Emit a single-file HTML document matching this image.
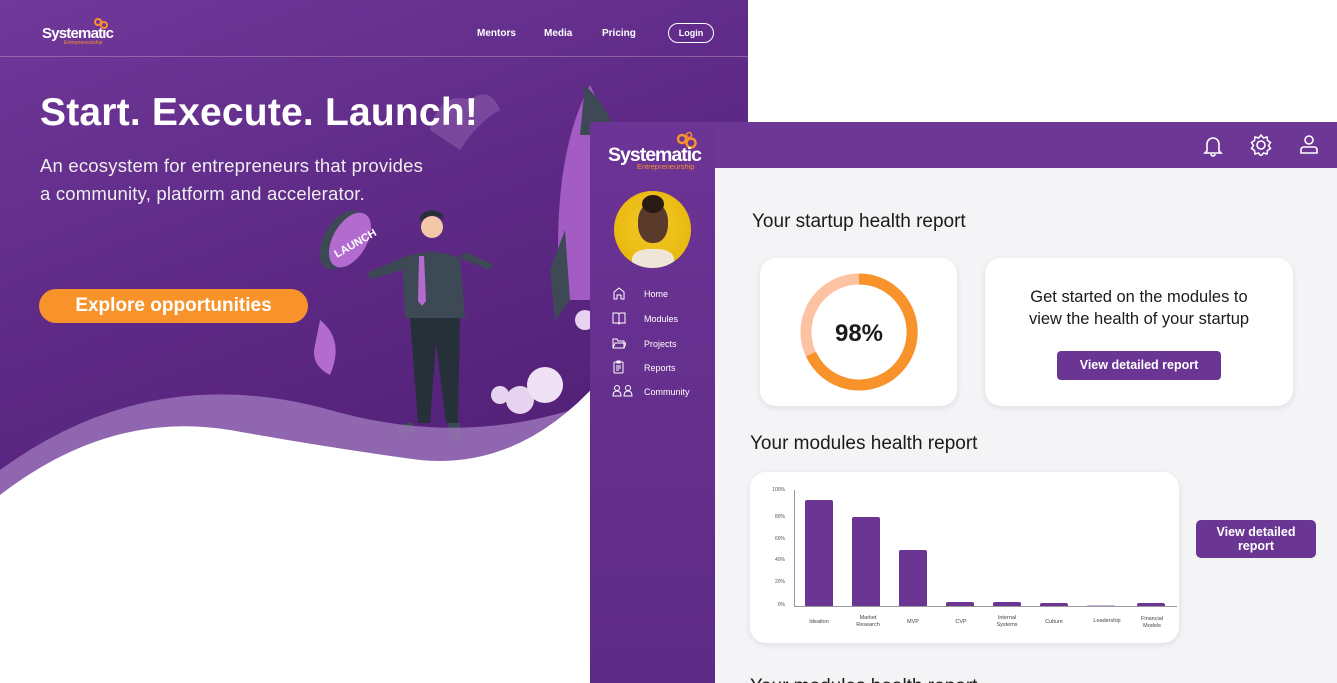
<!DOCTYPE html>
<html><head><meta charset="utf-8"><style>
*{margin:0;padding:0;box-sizing:border-box}
html,body{width:1337px;height:683px;overflow:hidden}
body{background:#fff;position:relative;font-family:"Liberation Sans",sans-serif}
.abs{position:absolute}
.land{left:0;top:0;width:748px;height:500px;background:linear-gradient(160deg,#71389a 0%,#5e2a86 45%,#4f1d72 100%);overflow:hidden}
.nav a{position:absolute;color:#fff;font-size:10px;font-weight:bold;top:28px}
.dash{left:590px;top:122px;width:747px;height:561px;background:#f4f3f5;overflow:hidden}
.side{left:0;top:0;width:125px;height:561px;background:linear-gradient(180deg,#6c3495,#5e2a87)}
.head{left:0;top:0;width:747px;height:46px;background:#6d3795}
.card{background:#fff;border-radius:16px;box-shadow:0 2px 6px rgba(100,60,140,.12)}
.btn{background:#6b3594;color:#fff;font-weight:bold;border-radius:4px;text-align:center}
.ni{position:absolute;left:24px;color:#fff;font-size:9px}
.ni svg{position:absolute;left:-2px;top:-3px}
.ni span{position:absolute;left:30px;top:0;white-space:nowrap}
.yl{position:absolute;left:10px;width:25px;text-align:right;font-size:5px;color:#555}
.bar{position:absolute;background:#6b3594;width:28px;border-radius:2px 2px 0 0}
.xl{position:absolute;font-size:5.5px;color:#444;text-align:center;width:40px;line-height:7px}
</style></head><body>

<div class="abs land">
  <svg class="abs" style="left:0;top:0" width="748" height="500">
    <path d="M430 130 q10-40 40-30 q20-15 30 10 q-20 10-40 40 z" fill="#8a5aa8" opacity=".6"/>
    <path d="M560 300 q-10-140 30-215 q30 60 40 215 z" fill="#a35cc4"/>
    <path d="M585 85 q25 25 30 50 l-35 0 z" fill="#3d4a55"/>
    <path d="M565 230 l-15 40 l5 50 l15-20 z" fill="#3d4a55"/>
    <ellipse cx="342" cy="240" rx="18" ry="32" transform="rotate(30 342 240)" fill="#3d4a55"/>
    <ellipse cx="350" cy="240" rx="17" ry="30" transform="rotate(30 350 240)" fill="#b36bd0"/>
    <text x="337" y="258" fill="#fff" font-size="11" font-weight="bold" transform="rotate(-30 337 258)">LAUNCH</text>
    <circle cx="432" cy="227" r="11" fill="#f4c7a8"/><path d="M420 222 q12-12 24-2 l-2-6 q-12-8-22 2z" fill="#253038"/>
    <path d="M402 258 q30-12 58 0 l5 60 l-60 0 z" fill="#3d4a55"/>
    <path d="M402 258 l-35 15 l4 6 l35-10z M460 258 l30 12 l3-6 l-28-12z" fill="#3d4a55"/>
    <path d="M419 256 l5 0 l2 45 l-4 5 l-4-5z" fill="#b36bd0"/>
    <path d="M410 318 l50 0 l-2 105 l-12 0 l-10-80 l-6 80 l-12 0z" fill="#253038"/>
    <path d="M398 425 l15-3 l2 10 l-18 3z M448 423 l12 0 l0 18 l-10 0z" fill="#3d4a55"/>
    <path d="M320 320 q25 20 10 55 q-20-10-15-30z" fill="#b36bd0"/>
    <circle cx="520" cy="400" r="14" fill="#e6d3ef"/><circle cx="545" cy="385" r="18" fill="#efe2f5"/><circle cx="500" cy="395" r="9" fill="#e6d3ef"/><circle cx="585" cy="320" r="10" fill="#e6d3ef"/>
    <path d="M0 470 Q150 360 330 410 Q470 450 600 400 L748 360 L748 500 L0 500z" fill="#9a72b8" opacity=".85"/>
    <path d="M0 495 Q110 410 230 430 Q330 448 420 460 Q520 470 600 380 L748 330 L748 500 L0 500z" fill="#fff"/>
  </svg>
  <div class="abs" style="left:0;top:56px;width:748px;height:1px;background:rgba(255,255,255,.25)"></div>
  <div class="abs" style="left:42px;top:25px;color:#fff;font-weight:bold;font-size:15px;letter-spacing:-.8px">Systematic</div>
  <div class="abs" style="left:64px;top:40px;color:#f7932a;font-size:5px">Entrepreneurship</div>
  <svg class="abs" style="left:93px;top:16px" width="16" height="14"><circle cx="5" cy="6" r="3" fill="none" stroke="#f7932a" stroke-width="2"/><circle cx="11" cy="9" r="3" fill="none" stroke="#f7932a" stroke-width="2"/></svg>
  <div class="nav"><a style="left:477px">Mentors</a><a style="left:544px">Media</a><a style="left:602px">Pricing</a></div>
  <div class="abs" style="left:668px;top:23px;width:46px;height:20px;border:1px solid #fff;border-radius:10px;color:#fff;font-size:9px;font-weight:bold;text-align:center;line-height:18px">Login</div>
  <div class="abs" style="left:40px;top:91px;color:#fff;font-size:39px;font-weight:bold;letter-spacing:.2px">Start. Execute. Launch!</div>
  <div class="abs" style="left:40px;top:152px;color:#eee;font-size:18.5px;line-height:28px;letter-spacing:.2px">An ecosystem for entrepreneurs that provides<br>a community, platform and accelerator.</div>
  <div class="abs" style="left:39px;top:289px;width:269px;height:34px;background:#f7932a;border-radius:17px;color:#fff;font-size:19px;font-weight:bold;text-align:center;line-height:34px">Explore opportunities</div>
</div>

<div class="abs dash">
  <div class="abs head"></div>
  <div class="abs side">
    <svg class="abs" style="left:85px;top:9px" width="24" height="20"><circle cx="7" cy="8" r="4" fill="none" stroke="#f7932a" stroke-width="2.5"/><circle cx="16" cy="12" r="4.5" fill="none" stroke="#f7932a" stroke-width="2.5"/><circle cx="14" cy="4" r="2.5" fill="none" stroke="#f7932a" stroke-width="1.5"/></svg>
    <div class="abs" style="left:18px;top:22px;color:#fff;font-weight:bold;font-size:19.5px;letter-spacing:-1px">Systematic</div>
    <div class="abs" style="left:47px;top:40px;color:#f7932a;font-size:7.5px">Entrepreneurship</div>
    <div class="abs" style="left:24px;top:69px;width:77px;height:77px;border-radius:50%;background:radial-gradient(circle at 50% 45%,#f3c92a 0%,#e9b90f 70%,#d8a300 100%);overflow:hidden">
      <div class="abs" style="left:24px;top:12px;width:30px;height:40px;border-radius:45%;background:#5a3a2a"></div>
      <div class="abs" style="left:18px;top:58px;width:42px;height:25px;border-radius:40% 40% 0 0;background:#efe6d9"></div>
      <div class="abs" style="left:28px;top:4px;width:22px;height:18px;border-radius:50%;background:#2a1a14"></div>
    </div>
    <div class="ni" style="top:167px"><svg width="14" height="14"><path d="M2 13V6l5-4 5 4v7H9V9H5v4z" fill="none" stroke="#fff"/></svg><span>Home</span></div>
    <div class="ni" style="top:192px"><svg width="14" height="14"><path d="M1 2h5l1 1 1-1h5v10H8l-1 1-1-1H1z M7 3v10" fill="none" stroke="#fff"/></svg><span>Modules</span></div>
    <div class="ni" style="top:217px"><svg width="14" height="14"><path d="M1 3h4l1 2h6v7H1z M1 12l2-5h11l-2 5" fill="none" stroke="#fff"/></svg><span>Projects</span></div>
    <div class="ni" style="top:241px"><svg width="14" height="14"><rect x="2" y="2" width="9" height="11" rx="1" fill="none" stroke="#fff"/><path d="M5 1h3v2H5z M4 6h5M4 8h5M4 10h3" stroke="#fff" fill="none"/></svg><span>Reports</span></div>
    <div class="ni" style="top:265px;left:24px"><svg style="left:-2px" width="26" height="14"><circle cx="5" cy="4" r="2.5" fill="none" stroke="#fff"/><path d="M1 12q0-5 4-5t4 5z" fill="none" stroke="#fff"/><circle cx="16" cy="4" r="2.5" fill="none" stroke="#fff"/><path d="M12 12q0-5 4-5t4 5z" fill="none" stroke="#fff"/></svg><span>Community</span></div>
  </div>
  <svg class="abs" style="left:612px;top:12px" width="22" height="24"><path d="M5 17V10a6 6 0 0 1 12 0v7l2 2H3z M9 20a2 2 0 0 0 4 0" fill="none" stroke="#fff" stroke-width="1.6"/></svg>
  <svg class="abs" style="left:660px;top:12px" width="22" height="22"><path d="M11 1l2.5 3 3.5-1 .5 3.5 3 2-2 3 2 3-3 2-.5 3.5-3.5-1-2.5 3-2.5-3-3.5 1-.5-3.5-3-2 2-3-2-3 3-2 .5-3.5 3.5 1z" fill="none" stroke="#fff" stroke-width="1.5"/><circle cx="11" cy="11" r="4" fill="none" stroke="#fff" stroke-width="1.6"/></svg>
  <svg class="abs" style="left:708px;top:12px" width="22" height="22"><circle cx="11" cy="6" r="4" fill="none" stroke="#fff" stroke-width="1.6"/><path d="M3 19v-3q0-3 3-3h10q3 0 3 3v3z" fill="none" stroke="#fff" stroke-width="1.6"/></svg>

  <div class="abs" style="left:162px;top:89px;font-size:19px;color:#1b1b1b">Your startup health report</div>
  <div class="abs card" style="left:170px;top:136px;width:197px;height:148px"></div>
  <svg class="abs" style="left:207px;top:148px" width="124" height="124"><circle cx="62" cy="62" r="53" fill="none" stroke="#fdc2a2" stroke-width="11"/><path d="M62 9 A53 53 0 1 1 14 84" fill="none" stroke="#f7932a" stroke-width="11"/><text x="62" y="71" text-anchor="middle" font-size="24" font-weight="bold" fill="#1b1b1b" font-family="Liberation Sans">98%</text></svg>
  <div class="abs card" style="left:395px;top:136px;width:308px;height:148px"></div>
  <div class="abs" style="left:395px;top:164px;width:308px;text-align:center;font-size:16.5px;line-height:22px;color:#1b1b1b">Get started on the modules to<br>view the health of your startup</div>
  <div class="abs btn" style="left:467px;top:229px;width:164px;height:29px;line-height:29px;font-size:12.5px">View detailed report</div>

  <div class="abs" style="left:160px;top:311px;font-size:19px;color:#1b1b1b">Your modules health report</div>
  <div class="abs card" style="left:160px;top:350px;width:429px;height:171px">
    <div class="yl" style="top:15px">100%</div><div class="yl" style="top:42px">80%</div><div class="yl" style="top:64px">60%</div><div class="yl" style="top:85px">40%</div><div class="yl" style="top:107px">20%</div><div class="yl" style="top:130px">0%</div>
    <div class="abs" style="left:44px;top:18px;width:1px;height:116px;background:#999"></div>
    <div class="abs" style="left:44px;top:134px;width:383px;height:1px;background:#999"></div>
    <div class="bar" style="left:55px;top:28px;height:106px"></div>
    <div class="bar" style="left:102px;top:45px;height:89px"></div>
    <div class="bar" style="left:149px;top:78px;height:56px"></div>
    <div class="bar" style="left:196px;top:130px;height:4px"></div>
    <div class="bar" style="left:243px;top:130px;height:4px"></div>
    <div class="bar" style="left:290px;top:131px;height:3px"></div>
    <div class="bar" style="left:337px;top:133px;height:1px;background:#c9b3dc"></div>
    <div class="bar" style="left:387px;top:131px;height:3px"></div>
    <div class="xl" style="left:49px;top:147px">Ideation</div>
    <div class="xl" style="left:98px;top:143px">Market Research</div>
    <div class="xl" style="left:143px;top:147px">MVP</div>
    <div class="xl" style="left:191px;top:147px">CVP</div>
    <div class="xl" style="left:237px;top:143px">Internal Systems</div>
    <div class="xl" style="left:284px;top:147px">Culture</div>
    <div class="xl" style="left:337px;top:146px">Leadership</div>
    <div class="xl" style="left:387px;top:144px;width:30px">Financial Models</div>
  </div>
  <div class="abs btn" style="left:606px;top:398px;width:120px;height:38px;font-size:12.5px;line-height:14px;padding-top:5px;border-radius:5px">View detailed<br>report</div>
  <div class="abs" style="left:160px;top:554px;font-size:19px;color:#1b1b1b">Your modules health report</div>
</div>
</body></html>
